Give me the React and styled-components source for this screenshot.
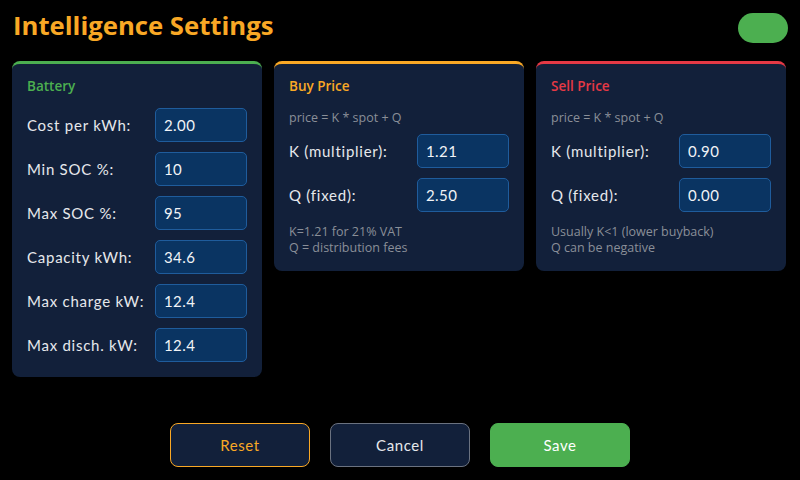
import React from 'react'
import styled, { createGlobalStyle } from 'styled-components'

const Global = createGlobalStyle`
  html, body { margin: 0; padding: 0; background: #000; }
  * { box-sizing: border-box; }
`;

const Screen = styled.div`
  width: 800px;
  height: 480px;
  background: #000;
  display: flex;
  flex-direction: column;
  padding: 0 12px 13px 12px;
  font-family: "Open Sans", "Noto Sans", sans-serif;
  overflow: hidden;
`;

const Header = styled.div`
  height: 55px;
  display: flex;
  align-items: center;
  justify-content: space-between;
`;

const Title = styled.h1`
  margin: -3px 0 0 1px;
  font-size: 25.7px;
  font-weight: 700;
  color: #f9a825;
  line-height: 1;
`;

const Toggle = styled.div`
  width: 50px;
  height: 30px;
  border-radius: 15px;
  background: #4caf50;
`;

const Cards = styled.div`
  margin-top: 6px;
  display: flex;
  gap: 12px;
  align-items: flex-start;
`;

const Card = styled.div`
  width: 250px;
  background: #12203a;
  border-top: 3px solid ${p => p.accent};
  border-radius: 8px;
  padding: 12px 15px 15px 15px;
  display: flex;
  flex-direction: column;
`;

const CardTitle = styled.div`
  font-size: 13.5px;
  font-weight: 600;
  color: ${p => p.accent};
  height: 20px;
  line-height: 20px;
  margin-bottom: ${p => p.gap}px;
`;

const Formula = styled.div`
  font-size: 12.5px;
  color: #8a8f98;
  height: 16px;
  line-height: 16px;
  margin-bottom: 8px;
`;

const Rows = styled.div`
  display: flex;
  flex-direction: column;
  gap: 10px;
`;

const Row = styled.div`
  display: flex;
  align-items: center;
  justify-content: space-between;
`;

const Label = styled.span`
  font-family: "Lato", "Noto Sans", sans-serif;
  font-size: 15px;
  color: #e6e8ec;
  letter-spacing: 0.75px;
`;

const Input = styled.input`
  width: 92px;
  height: 34px;
  background: #0a3462;
  border: 1px solid #1f5c9c;
  border-radius: 5px;
  color: #f1f3f6;
  font-family: "Lato", "Noto Sans", sans-serif;
  font-size: 15px;
  letter-spacing: 0.4px;
  padding: 0 8px;
  outline: none;
`;

const Note = styled.div`
  margin-top: 12px;
  font-size: 12.5px;
  line-height: 16px;
  color: #8a8f98;
`;

const Buttons = styled.div`
  margin-top: auto;
  display: flex;
  justify-content: center;
  gap: 20px;
`;

const Button = styled.button`
  width: 140px;
  height: 44px;
  border-radius: 8px;
  font-family: "Lato", "Noto Sans", sans-serif;
  font-size: 15px;
  letter-spacing: 0.6px;
  cursor: pointer;
  background: ${p => p.bg};
  color: ${p => p.fg};
  border: 1px solid ${p => p.line};
`;

const battery = [
  ['Cost per kWh:', '2.00'],
  ['Min SOC %:', '10'],
  ['Max SOC %:', '95'],
  ['Capacity kWh:', '34.6'],
  ['Max charge kW:', '12.4'],
  ['Max disch. kW:', '12.4'],
];

const PriceCard = ({ title, accent, k, q, notes }) => (
  <Card accent={accent}>
    <CardTitle accent={accent} gap={14}>{title}</CardTitle>
    <Formula>price = K * spot + Q</Formula>
    <Rows>
      <Row>
        <Label>K (multiplier):</Label>
        <Input defaultValue={k} />
      </Row>
      <Row>
        <Label>Q (fixed):</Label>
        <Input defaultValue={q} />
      </Row>
    </Rows>
    <Note>
      {notes.map(n => <div key={n}>{n}</div>)}
    </Note>
  </Card>
);

const App = () => {
  return (
    <Screen>
      <Global />
      <Header>
        <Title>Intelligence Settings</Title>
        <Toggle />
      </Header>
      <Cards>
        <Card accent="#4caf50">
          <CardTitle accent="#4caf50" gap={12}>Battery</CardTitle>
          <Rows>
            {battery.map(([l, v]) => (
              <Row key={l}>
                <Label>{l}</Label>
                <Input defaultValue={v} />
              </Row>
            ))}
          </Rows>
        </Card>
        <PriceCard
          title="Buy Price"
          accent="#f9a825"
          k="1.21"
          q="2.50"
          notes={['K=1.21 for 21% VAT', 'Q = distribution fees']}
        />
        <PriceCard
          title="Sell Price"
          accent="#e53945"
          k="0.90"
          q="0.00"
          notes={['Usually K<1 (lower buyback)', 'Q can be negative']}
        />
      </Cards>
      <Buttons>
        <Button bg="#12203a" fg="#f9a825" line="#f9a825">Reset</Button>
        <Button bg="#12203a" fg="#e6e8ec" line="#6b7280">Cancel</Button>
        <Button bg="#4caf50" fg="#ffffff" line="#4caf50">Save</Button>
      </Buttons>
    </Screen>
  )
}

export default App
